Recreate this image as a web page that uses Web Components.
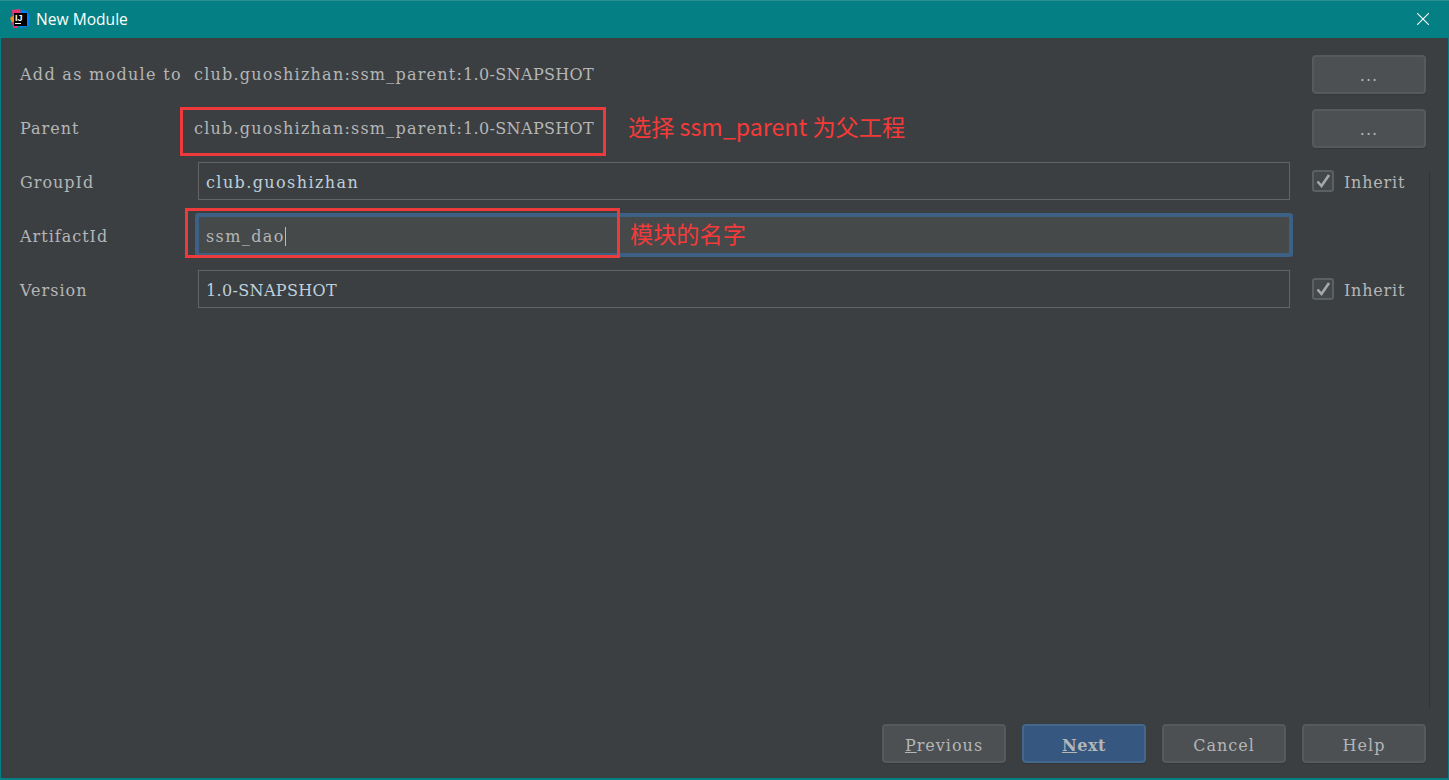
<!DOCTYPE html>
<html lang="zh">
<head>
<meta charset="utf-8">
<title>New Module</title>
<style>
  html, body { margin: 0; height: 100%; background: #3c3f41; overflow: hidden; }
  .lower { letter-spacing: 1.22px; }
  .caps { letter-spacing: 0.35px; }
</style>
</head>
<body>
<module-dialog>
  <title-bar slot="title">New Module</title-bar>

  <form-label slot="form" style="letter-spacing:1.3px;padding-top:1px">Add as module to</form-label>
  <form-label slot="form" style="padding-top:1px"><span class="lower">club.guoshizhan:ssm_parent:</span><span class="caps">1.0-SNAPSHOT</span></form-label>
  <dialog-button slot="form" dots>...</dialog-button>

  <form-label slot="form">Parent</form-label>
  <form-label slot="form"><span class="lower">club.guoshizhan:ssm_parent:</span><span class="caps">1.0-SNAPSHOT</span></form-label>
  <dialog-button slot="form" dots>...</dialog-button>

  <form-label slot="form">GroupId</form-label>
  <text-field slot="form" tint><span style="letter-spacing:1.4px">club.guoshizhan</span></text-field>
  <inherit-check slot="form"></inherit-check>

  <form-label slot="form">ArtifactId</form-label>
  <text-field slot="form" focused><span style="letter-spacing:1.4px">ssm_dao</span></text-field>
  <span slot="form"></span>

  <form-label slot="form">Version</form-label>
  <text-field slot="form" tint><span class="caps">1.0-SNAPSHOT</span></text-field>
  <inherit-check slot="form"></inherit-check>

  <dialog-button slot="footer" wide><u>P</u>revious</dialog-button>
  <dialog-button slot="footer" wide primary><u>N</u>ext</dialog-button>
  <dialog-button slot="footer" wide>Cancel</dialog-button>
  <dialog-button slot="footer" wide>Help</dialog-button>

  <red-note slot="notes" style="left:179px;top:107px;width:420px;height:43px"></red-note>
  <red-note slot="notes" style="left:184px;top:208px;width:429px;height:44px"></red-note>
  <note-text slot="notes" style="left:627px;top:110px">选择 ssm_parent 为父工程</note-text>
  <note-text slot="notes" style="left:629px;top:217px">模块的名字</note-text>
</module-dialog>

<script>
const SERIF = '"DejaVu Serif", serif';

class ModuleDialog extends HTMLElement {
    constructor() {
        super();
        this.attachShadow({ mode: 'open' });
        this.shadowRoot.innerHTML = `
      <style>
        :host {
          display: flex;
          flex-direction: column;
          position: relative;
          box-sizing: border-box;
          width: 100%;
          height: 100vh;
          background: #3c3f41;
          border: 1px solid #048084;
          border-top: 0;
          border-bottom-width: 2px;
          font-family: ${SERIF};
          color: #bbbbbb;
        }
        .form {
          display: grid;
          grid-template-columns: 152px 1fr 114px;
          grid-auto-rows: 38px;
          column-gap: 22px;
          row-gap: 16px;
          align-items: center;
          padding: 17px 22px 0 19px;
        }
        .form-wrap { flex: 1; }
        .footer {
          display: flex;
          justify-content: flex-end;
          gap: 16px;
          padding: 0 22px 15px 0;
        }
        .rail {
          position: absolute;
          left: 1428px;
          top: 172px;
          width: 1px;
          height: 536px;
          background: #323436;
        }
      </style>
      <slot name="title"></slot>
      <div class="form-wrap"><div class="form"><slot name="form"></slot></div></div>
      <div class="footer"><slot name="footer"></slot></div>
      <div class="rail"></div>
      <slot name="notes"></slot>
    `;
    }
}

class TitleBar extends HTMLElement {
    constructor() {
        super();
        this.attachShadow({ mode: 'open' });
        this.shadowRoot.innerHTML = `
      <style>
        :host {
          display: flex;
          align-items: center;
          flex: none;
          box-sizing: border-box;
          height: 38px;
          margin: 0 -1px;
          padding: 0 20px 2px 10px;
          background: #048084;
          border-top: 1px solid #2a8f92;
          color: #ffffff;
          font: 15.6px "Open Sans", sans-serif;
        }
        .logo { width: 20px; height: 20px; margin-right: 6px; flex: none; }
        .text { flex: 1; }
        .close { width: 12px; height: 12px; }
      </style>
      <svg class="logo" viewBox="0 0 20 20">
        <polygon points="2,1 10,0 12,8 3,12" fill="#e8366f"/>
        <polygon points="0,9 4,6 5,13 2,14" fill="#f78c1f"/>
        <polygon points="2,13 8,12 8,19 3,19" fill="#d9347f"/>
        <polygon points="11,1 17,2 20,7 19,17 9,19" fill="#087cfa"/>
        <rect x="4" y="4" width="13" height="13" fill="#000000"/>
        <text x="5" y="12" font-family="Liberation Sans, sans-serif" font-weight="700" font-size="9" fill="#ffffff">IJ</text>
        <rect x="5" y="14" width="6" height="1" fill="#ffffff"/>
      </svg>
      <span class="text"><slot></slot></span>
      <svg class="close" viewBox="0 0 12 12"><path d="M0 0 12 12M12 0 0 12" stroke="#ffffff" stroke-width="1.1" fill="none"/></svg>
    `;
    }
}

class FormLabel extends HTMLElement {
    constructor() {
        super();
        this.attachShadow({ mode: 'open' });
        this.shadowRoot.innerHTML = `
      <style>
        :host {
          display: block;
          font-size: 16px;
          letter-spacing: 1px;
          white-space: nowrap;
          color: #b4b6b7;
        }
      </style>
      <slot></slot>
    `;
    }
}

class TextField extends HTMLElement {
    constructor() {
        super();
        this.attachShadow({ mode: 'open' });
        this.shadowRoot.innerHTML = `
      <style>
        :host {
          display: flex;
          align-items: center;
          box-sizing: border-box;
          height: 38px;
          margin: 0 0 2px 4px;
          padding: 2px 7px 0;
          background: #3c3f41;
          border: 1px solid #646464;
          font-size: 16px;
          letter-spacing: 1px;
          color: #b4b6b7;
        }
        :host([tint]) { color: #bfd0dc; }
        :host([focused]) {
          background: #45494a;
          border-color: #3d6185;
          box-shadow: 0 0 0 3px #3d6185;
          border-radius: 1px;
        }
        .caret { display: none; width: 1px; height: 19px; background: #bbbbbb; }
        :host([focused]) .caret { display: block; }
      </style>
      <slot></slot><span class="caret"></span>
    `;
    }
}

class DialogButton extends HTMLElement {
    constructor() {
        super();
        this.attachShadow({ mode: 'open' });
        this.shadowRoot.innerHTML = `
      <style>
        :host {
          display: flex;
          align-items: center;
          justify-content: center;
          box-sizing: border-box;
          height: 39px;
          padding-top: 4px;
          background: #4c5052;
          border: 2px solid #565a5c;
          border-radius: 4px;
          box-shadow: 0 1px 1px #35383a;
          font-size: 16px;
          letter-spacing: 1px;
          color: #b4b6b7;
        }
        :host([wide]) { width: 124px; }
        :host([dots]) { letter-spacing: 1px; padding-top: 3px; }
        :host([primary]) {
          background: #365880;
          border-color: #43688c;
          font-weight: 700;
          letter-spacing: 0.6px;
        }
      </style>
      <slot></slot>
    `;
    }
}

class InheritCheck extends HTMLElement {
    constructor() {
        super();
        this.attachShadow({ mode: 'open' });
        this.shadowRoot.innerHTML = `
      <style>
        :host {
          display: flex;
          align-items: center;
          font-size: 16px;
          letter-spacing: 0.8px;
          color: #b4b6b7;
        }
        .box {
          box-sizing: border-box;
          width: 22px;
          height: 22px;
          margin: 0 10px 2px 0;
          background: #43494a;
          border: 2px solid #5d6061;
          border-radius: 3px;
        }
        svg { display: block; width: 18px; height: 18px; }
      </style>
      <span class="box"><svg viewBox="0 0 18 18"><path d="M3.5 9.5 7.5 14 15 3" stroke="#a8a8a8" stroke-width="2.6" fill="none"/></svg></span>
      Inherit
    `;
    }
}

class RedNote extends HTMLElement {
    constructor() {
        super();
        this.attachShadow({ mode: 'open' });
        this.shadowRoot.innerHTML = `
      <style>
        :host {
          display: block;
          position: absolute;
          border: 3px solid #ee3a3a;
        }
      </style>
    `;
    }
}

class NoteText extends HTMLElement {
    constructor() {
        super();
        this.attachShadow({ mode: 'open' });
        this.shadowRoot.innerHTML = `
      <style>
        :host {
          display: block;
          position: absolute;
          font: 23.2px/32px "Noto Sans CJK SC", "Noto Sans", sans-serif;
          color: #f53a3a;
          white-space: nowrap;
        }
      </style>
      <slot></slot>
    `;
    }
}

customElements.define('module-dialog', ModuleDialog);
customElements.define('title-bar', TitleBar);
customElements.define('form-label', FormLabel);
customElements.define('text-field', TextField);
customElements.define('dialog-button', DialogButton);
customElements.define('inherit-check', InheritCheck);
customElements.define('red-note', RedNote);
customElements.define('note-text', NoteText);
</script>
</body>
</html>
